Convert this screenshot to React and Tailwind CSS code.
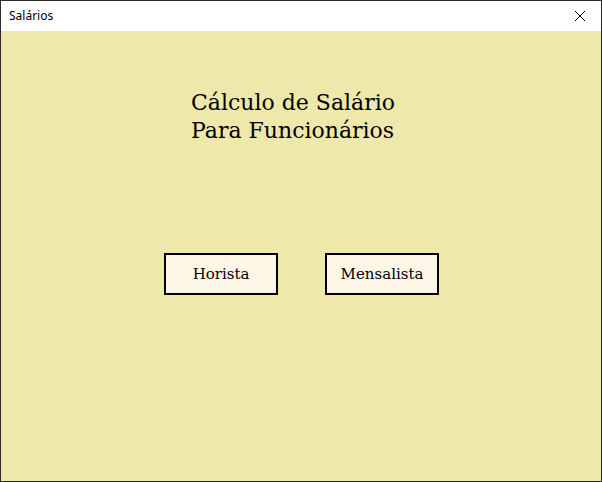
import React from 'react';

const FormButton = ({ label }) => (
  <button
    type="button"
    className="w-[114px] h-[42px] border-2 border-black bg-[#fdf5e6] text-[15px] text-black flex items-center justify-center font-['DejaVu_Serif',serif]"
  >
    {label}
  </button>
);

export default function App() {
  return (
    <div className="w-[602px] h-[482px] flex flex-col border border-[#2b2b2b] bg-[#eee8aa]">
      <div className="h-[30px] bg-white flex items-center justify-between pl-2 pr-2 shrink-0">
        <span className="text-[12px] text-black font-['Noto_Sans',sans-serif]">Salários</span>
        <svg width="12" height="12" viewBox="0 0 12 12" className="mr-[7px]">
          <path d="M1 1 L11 11 M11 1 L1 11" stroke="#000" strokeWidth="1" />
        </svg>
      </div>
      <div className="flex-1 flex flex-col">
        <h1 className="mt-[58px] ml-[190px] text-[22px] leading-[28px] text-black font-['DejaVu_Serif',serif]">
          Cálculo de Salário
          <br />
          Para Funcionários
        </h1>
        <div className="mt-[108px] ml-[163px] flex gap-[47px]">
          <FormButton label="Horista" />
          <FormButton label="Mensalista" />
        </div>
      </div>
    </div>
  );
}
